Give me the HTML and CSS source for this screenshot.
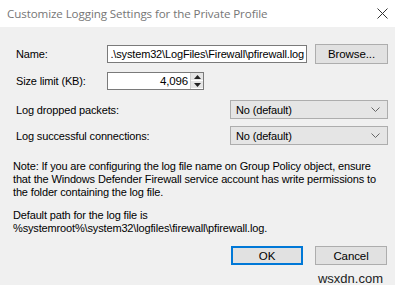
FILE: index.html
```html
<!DOCTYPE html>
<html>
<head>
<meta charset="utf-8">
<link rel="stylesheet" href="styles.css">
</head>
<body>
<div class="window">
  <div class="titlebar">
    <span class="title">Customize Logging Settings for the Private Profile</span>
    <svg class="close" width="11" height="11" viewBox="0 0 11 11"><path d="M0.5 0.5 L10.5 10.5 M10.5 0.5 L0.5 10.5" stroke="#333" stroke-width="1" fill="none"/></svg>
  </div>
  <div class="content">
    <div class="row row-name">
      <label class="lbl">Name:</label>
      <div class="textbox name-box"><span class="name-text">.\system32\LogFiles\Firewall\pfirewall.log</span></div>
      <button class="btn browse">Browse...</button>
    </div>
    <div class="row row-size">
      <label class="lbl">Size limit (KB):</label>
      <div class="textbox size-box">
        <span class="size-val">4,096</span>
        <div class="spin">
          <div class="spin-btn"><svg width="7" height="4" viewBox="0 0 7 4"><path d="M3.5 0 L7 4 L0 4 Z" fill="#222"/></svg></div>
          <div class="spin-btn"><svg width="7" height="4" viewBox="0 0 7 4"><path d="M0 0 L7 0 L3.5 4 Z" fill="#222"/></svg></div>
        </div>
      </div>
    </div>
    <div class="row row-drop">
      <label class="lbl">Log dropped packets:</label>
      <div class="combo"><span>No (default)</span><svg class="chev" width="9" height="5" viewBox="0 0 9 5"><path d="M0.5 0.5 L4.5 4.5 L8.5 0.5" stroke="#666" fill="none"/></svg></div>
    </div>
    <div class="row row-succ">
      <label class="lbl">Log successful connections:</label>
      <div class="combo"><span>No (default)</span><svg class="chev" width="9" height="5" viewBox="0 0 9 5"><path d="M0.5 0.5 L4.5 4.5 L8.5 0.5" stroke="#666" fill="none"/></svg></div>
    </div>
    <p class="note">Note: If you are configuring the log file name on Group Policy object, ensure that the Windows Defender Firewall service account has write permissions to the folder containing the log file.</p>
    <p class="note path">Default path for the log file is<br>%systemroot%\system32\logfiles\firewall\pfirewall.log.</p>
    <div class="actions">
      <button class="btn ok">OK</button>
      <button class="btn cancel">Cancel</button>
    </div>
    <div class="watermark">wsxdn.com</div>
  </div>
</div>
</body>
</html>
```

FILE: styles.css
```css
html, body {
  margin: 0;
  padding: 0;
}
body {
  width: 395px;
  height: 285px;
  overflow: hidden;
  background: #f0f0f0;
  font-family: "Liberation Sans", Arial, sans-serif;
  font-size: 11px;
  letter-spacing: -0.15px;
  color: #000;
}
.window {
  width: 395px;
  height: 285px;
  display: flex;
  flex-direction: column;
}
.titlebar {
  height: 27px;
  background: #fff;
  display: flex;
  align-items: center;
  justify-content: space-between;
  padding: 0 7px 0 7px;
  box-sizing: border-box;
  flex-shrink: 0;
}
.title {
  font-family: "Open Sans", "Noto Sans", sans-serif;
  font-size: 11.6px;
  color: #767676;
  letter-spacing: -0.1px;
}
.content {
  flex: 1;
  padding: 17px 7px 0 16px;
  display: flex;
  flex-direction: column;
}
.row {
  display: flex;
  align-items: center;
}
.lbl {
  width: 91px;
  flex-shrink: 0;
  white-space: nowrap;
}
.textbox {
  background: #fff;
  border: 1px solid #7a7a7a;
  box-sizing: border-box;
  height: 18px;
  display: flex;
  align-items: center;
  overflow: hidden;
}
.name-box {
  width: 200px;
  justify-content: flex-end;
  padding-right: 2px;
}
.name-text {
  white-space: nowrap;
}
.browse {
  margin-left: 8px;
  width: 73px;
  height: 20px;
}
.btn {
  font-family: "Liberation Sans", Arial, sans-serif;
  font-size: 11.5px;
  letter-spacing: -0.1px;
  background: #e1e1e1;
  border: 1px solid #adadad;
  box-sizing: border-box;
  padding: 0;
  color: #000;
}
.row-size {
  margin-top: 8px;
}
.size-box {
  width: 97px;
  justify-content: flex-end;
}
.size-val {
  padding-right: 2px;
  font-size: 11.5px;
}
.spin {
  width: 12px;
  height: 16px;
  display: flex;
  flex-direction: column;
  border-left: 1px solid #ccc;
}
.spin-btn {
  flex: 1;
  background: #e5e5e5;
  display: flex;
  align-items: center;
  justify-content: center;
  border-bottom: 1px solid #fff;
}
.row-drop {
  margin-top: 10px;
}
.row-succ {
  margin-top: 7px;
}
.row-drop .lbl, .row-succ .lbl {
  width: 214px;
}
.combo {
  width: 158px;
  height: 19px;
  background: #e5e5e5;
  border: 1px solid #adadad;
  box-sizing: border-box;
  display: flex;
  align-items: center;
  justify-content: space-between;
  padding: 0 7px 0 5px;
}
.note {
  margin: 15px 0 0 -3px;
  line-height: 13px;
  width: 366px;
}
.path {
  margin-top: 10px;
}
.actions {
  display: flex;
  justify-content: flex-end;
  gap: 12px;
  margin-top: 11px;
  padding-right: 1px;
}
.ok, .cancel {
  width: 72px;
  height: 19px;
}
.ok {
  border: 2px solid #0078d7;
}
.watermark {
  align-self: flex-end;
  margin-right: 5px;
  margin-top: 6px;
  font-size: 13px;
  line-height: 15px;
  letter-spacing: 0;
  color: #222;
}
```
